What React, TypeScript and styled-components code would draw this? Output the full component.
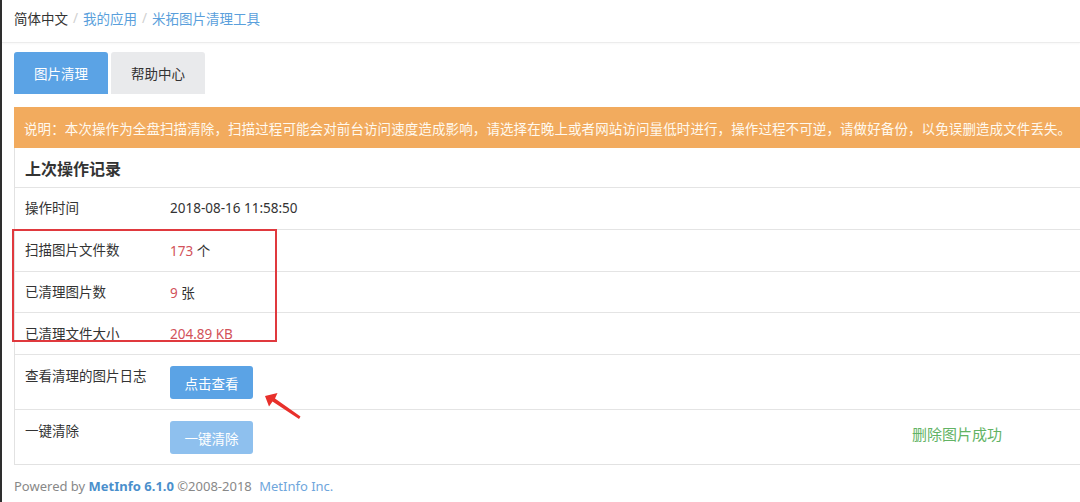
import React from "react";
import styled, { createGlobalStyle } from "styled-components";

const GlobalStyle = createGlobalStyle`
  html, body {
    margin: 0;
    padding: 0;
    background: #fff;
  }
  body {
    font-family: "Noto Sans", "Noto Sans CJK SC", sans-serif;
    font-size: 13.5px;
    color: #333;
  }
`;

type RecordRow = {
  label: string;
  value?: string;
  unit?: string;
};

const records: RecordRow[] = [
  { label: "操作时间", unit: "2018-08-16 11:58:50" },
  { label: "扫描图片文件数", value: "173", unit: " 个" },
  { label: "已清理图片数", value: "9", unit: " 张" },
  { label: "已清理文件大小", value: "204.89 KB" },
];

export default function App() {
  return (
    <>
      <GlobalStyle />
      <Frame>
        <Breadcrumb>
          <Crumb>简体中文</Crumb>
          <Sep>/</Sep>
          <CrumbLink>我的应用</CrumbLink>
          <Sep>/</Sep>
          <CrumbLink>米拓图片清理工具</CrumbLink>
        </Breadcrumb>
        <Main>
          <Tabs>
            <Tab $active>图片清理</Tab>
            <Tab>帮助中心</Tab>
          </Tabs>
          <Panel>
            <Notice>
              说明：本次操作为全盘扫描清除，扫描过程可能会对前台访问速度造成影响，请选择在晚上或者网站访问量低时进行，操作过程不可逆，请做好备份，以免误删造成文件丢失。
            </Notice>
            <PanelTitle>上次操作记录</PanelTitle>
            {records.map((r) => (
              <Row key={r.label}>
                <Label>{r.label}</Label>
                <Value>
                  {r.value && <Num>{r.value}</Num>}
                  {r.unit}
                </Value>
              </Row>
            ))}
            <ActionRow>
              <Label>查看清理的图片日志</Label>
              <Button>点击查看</Button>
            </ActionRow>
            <ActionRow>
              <Label>一键清除</Label>
              <Button $disabled>一键清除</Button>
              <Success>删除图片成功</Success>
            </ActionRow>
          </Panel>
          <Footer>
            Powered by <Brand>MetInfo 6.1.0</Brand> ©2008-2018 <Company>MetInfo Inc.</Company>
          </Footer>
        </Main>
        <Highlight />
        <Arrow viewBox="0 0 40 28" width="40" height="28">
          <path d="M2 4 L14.5 1 L12 6.5 L37.5 24.5 L36 27 L9.5 9.5 L6 14.5 Z" fill="#e8302b" />
        </Arrow>
      </Frame>
    </>
  );
}

const Frame = styled.div`
  position: relative;
  min-height: 502px;
  border-left: 2px solid #2e2e2e;
  overflow: hidden;
`;

const Breadcrumb = styled.div`
  display: flex;
  align-items: center;
  height: 43px;
  padding: 0 0 7px 12px;
  box-sizing: border-box;
  border-bottom: 1px solid #ececec;
  box-shadow: 0 1px 2px rgba(0, 0, 0, 0.03);
`;

const Crumb = styled.span`
  color: #333;
`;

const CrumbLink = styled.span`
  color: #5a9fdc;
`;

const Sep = styled.span`
  color: #d0d0d0;
  padding: 0 5px;
`;

const Main = styled.div`
  padding: 9px 0 0 12px;
`;

const Tabs = styled.div`
  display: flex;
  gap: 3px;
  margin-bottom: 13px;
`;

const Tab = styled.div<{ $active?: boolean }>`
  width: 94px;
  height: 42px;
  display: flex;
  align-items: center;
  justify-content: center;
  border-radius: 3px 3px 0 0;
  background: ${(p) => (p.$active ? "#5ba3e5" : "#e9eaec")};
  color: ${(p) => (p.$active ? "#fff" : "#333")};
`;

const Panel = styled.div`
  border: 1px solid #e2e2e2;
  border-top: none;
  margin-right: -4px;
`;

const Notice = styled.div`
  background: #f2ab5e;
  color: #fff9ef;
  height: 41px;
  display: flex;
  align-items: center;
  padding-left: 10px;
  margin: 0 -1px;
  white-space: nowrap;
  letter-spacing: 0.1px;
`;

const PanelTitle = styled.div`
  height: 39px;
  display: flex;
  align-items: center;
  padding-left: 10px;
  font-size: 16px;
  font-weight: bold;
  color: #333;
`;

const Row = styled.div`
  display: flex;
  align-items: center;
  height: 41.75px;
  box-sizing: border-box;
  border-top: 1px solid #e4e4e4;
  padding-left: 10px;
`;

const ActionRow = styled.div`
  display: flex;
  align-items: flex-start;
  height: 55px;
  box-sizing: border-box;
  border-top: 1px solid #e4e4e4;
  padding: 11px 0 0 10px;
`;

const Label = styled.div`
  width: 145px;
  flex-shrink: 0;
  color: #333;
  line-height: 20px;
`;

const Value = styled.div`
  color: #333;
`;

const Num = styled.span`
  color: #d2525a;
`;

const Button = styled.div<{ $disabled?: boolean }>`
  width: 83px;
  height: 33px;
  display: flex;
  align-items: center;
  justify-content: center;
  border-radius: 3px;
  color: #fff;
  background: ${(p) => (p.$disabled ? "#8ec0ee" : "#5ba3e5")};
`;

const Success = styled.div`
  margin: 2px 0 0 659px;
  font-size: 15px;
  color: #62b364;
`;

const Footer = styled.div`
  padding-top: 12px;
  color: #888;
  font-size: 13px;
`;

const Brand = styled.b`
  color: #4a8fcc;
`;

const Company = styled.span`
  color: #6fa6dc;
  margin-left: 4px;
`;

const Highlight = styled.div`
  position: absolute;
  left: 10px;
  top: 229px;
  width: 261px;
  height: 109px;
  border: 2px solid #e0393e;
  pointer-events: none;
`;

const Arrow = styled.svg`
  position: absolute;
  left: 261px;
  top: 392px;
`;
